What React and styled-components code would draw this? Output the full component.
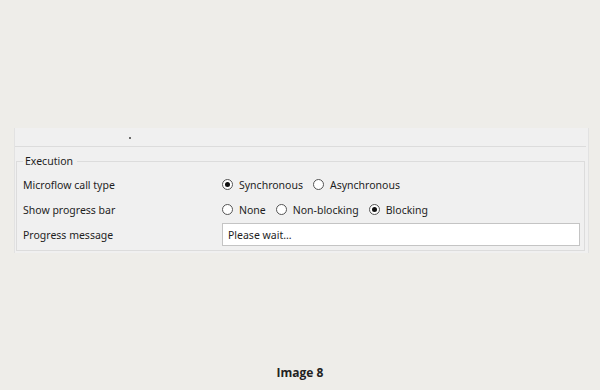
import React from 'react';
import styled, { createGlobalStyle } from 'styled-components';

const GlobalStyle = createGlobalStyle`
  html, body { margin: 0; padding: 0; }
  body { background: #eeede9; font-family: "Noto Sans", "Open Sans", sans-serif; }
`;

const Page = styled.div`
  width: 600px;
  height: 390px;
  display: flex;
  flex-direction: column;
  padding-top: 128px;
  box-sizing: border-box;
  background: #eeede9;
`;

const Panel = styled.div`
  margin-left: 14px;
  width: 575px;
  box-sizing: border-box;
  background: #f0f0f0;
  border-left: 1px solid #e2e2e2;
  border-right: 1px solid #e2e2e2;
  padding-bottom: 2px;
`;

const TopSection = styled.div`
  height: 18px;
  border-bottom: 1px solid #dcdcdc;
  margin-right: 2px;
  position: relative;
`;

const Dot = styled.span`
  position: absolute;
  left: 114px;
  top: 9px;
  width: 2px;
  height: 2px;
  background: #6b6b6b;
`;

const GroupBox = styled.fieldset`
  margin: 7px 3px 0 1px;
  padding: 4px 0 3px 6px;
  border: 1px solid #dcdcdc;
  min-width: 0;
`;

const Legend = styled.legend`
  padding: 0 4px 0 2px;
  margin-left: 0;
  font-size: 10.5px;
  color: #1e1e1e;
  line-height: 14px;
`;

const Row = styled.div`
  display: grid;
  grid-template-columns: 199px 1fr;
  align-items: center;
  height: 25px;
  margin-right: 4px;
`;

const Label = styled.span`
  font-size: 10.5px;
  color: #1e1e1e;
`;

const Options = styled.div`
  display: flex;
  align-items: center;
  gap: 10px;
`;

const Option = styled.label`
  display: flex;
  align-items: center;
  gap: 6px;
  font-size: 10.5px;
  color: #1e1e1e;
`;

const Radio = styled.span`
  width: 11px;
  height: 11px;
  border-radius: 50%;
  border: 1px solid #555;
  background: #fff;
  box-sizing: border-box;
  display: flex;
  align-items: center;
  justify-content: center;
  &::after {
    content: '';
    width: 5px;
    height: 5px;
    border-radius: 50%;
    background: ${p => (p.$checked ? '#111' : 'transparent')};
  }
`;

const TextBox = styled.div`
  height: 23px;
  box-sizing: border-box;
  border: 1px solid #c4c4c4;
  background: #fff;
  display: flex;
  align-items: center;
  padding-left: 5px;
  font-size: 10.5px;
  color: #1e1e1e;
`;

const Caption = styled.div`
  margin-top: auto;
  margin-bottom: 9px;
  text-align: center;
  font-family: "Open Sans", sans-serif;
  font-weight: 700;
  font-size: 12px;
  color: #222;
`;

const RadioGroup = ({ options, value }) => (
  <Options>
    {options.map(o => (
      <Option key={o}>
        <Radio $checked={o === value} />
        {o}
      </Option>
    ))}
  </Options>
);

export default function App() {
  return (
    <Page>
      <GlobalStyle />
      <Panel>
        <TopSection>
          <Dot />
        </TopSection>
        <GroupBox>
          <Legend>Execution</Legend>
          <Row>
            <Label>Microflow call type</Label>
            <RadioGroup options={['Synchronous', 'Asynchronous']} value="Synchronous" />
          </Row>
          <Row>
            <Label>Show progress bar</Label>
            <RadioGroup options={['None', 'Non-blocking', 'Blocking']} value="Blocking" />
          </Row>
          <Row>
            <Label>Progress message</Label>
            <TextBox>Please wait...</TextBox>
          </Row>
        </GroupBox>
      </Panel>
      <Caption>Image 8</Caption>
    </Page>
  );
}
